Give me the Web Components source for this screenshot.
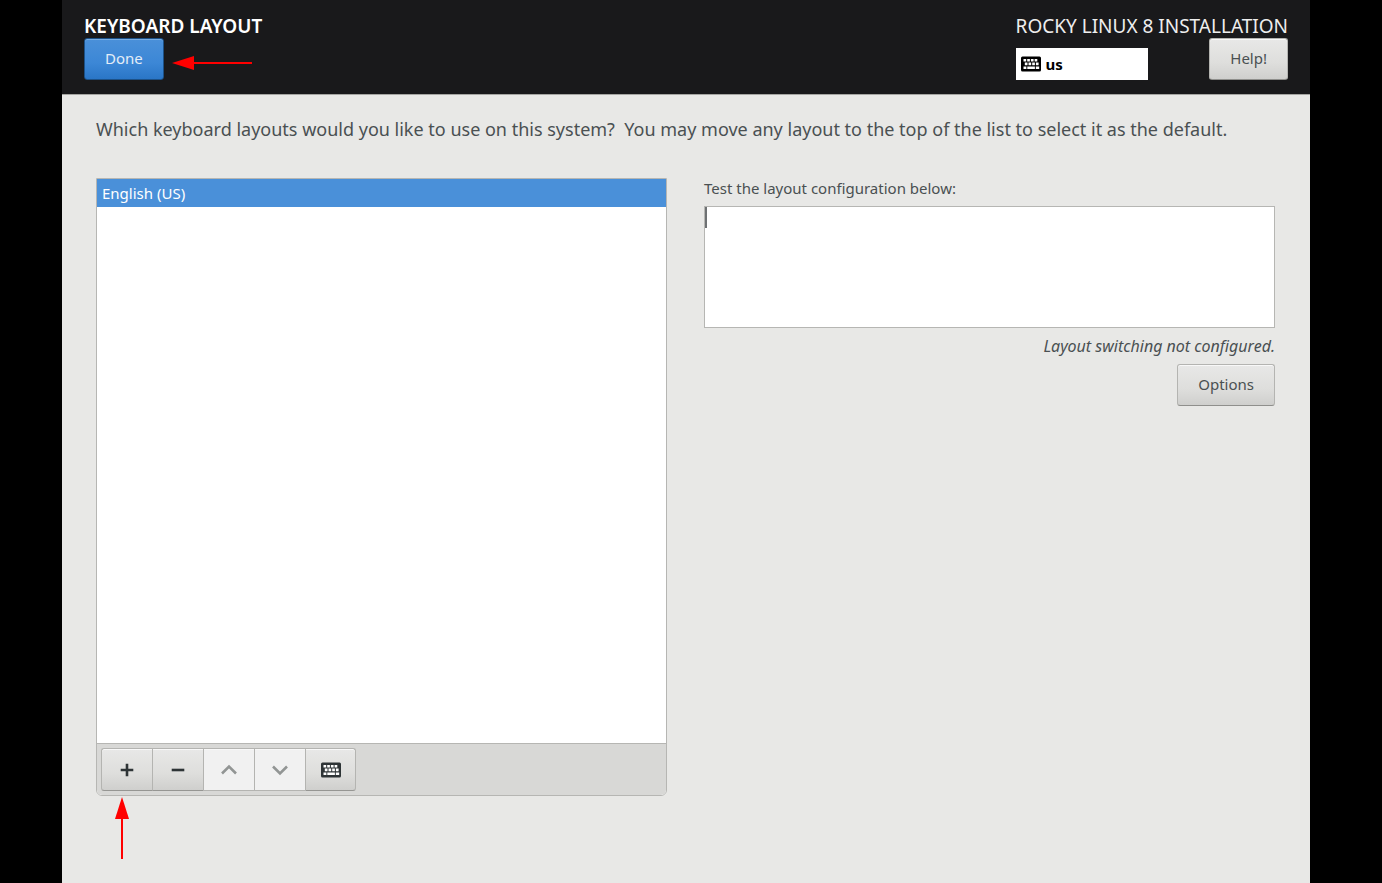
<!DOCTYPE html>
<html lang="en">
<head>
<meta charset="utf-8">
<meta name="viewport" content="width=device-width, initial-scale=1">
<title>Keyboard Layout</title>
<style>
    html { background: #000; }
    body { margin: 0; font: 15px/20px "Noto Sans", "Open Sans", sans-serif; color: #2e3436; }
</style>
</head>
<body>
<installer-page></installer-page>

<script>
// Icons are drawn on a 20x20 grid
const ICONS = {
    plus: '<path d="M8.700 3.700h2.600v5h5v2.600h-5v5H8.700v-5h-5V8.700h5z" fill="currentColor"/>',
    minus: '<path d="M3.700 8.700h12.600v2.600H3.700z" fill="currentColor"/>',
    up: '<path d="M3 13.500 10 6.500l7 7" fill="none" stroke="currentColor" stroke-width="2.600"/>',
    down: '<path d="M3 6.500 10 13.500 17 6.500" fill="none" stroke="currentColor" stroke-width="2.600"/>',
    keyboard: `<rect y="2.500" width="20" height="15" rx="1.500" fill="currentColor"/>
        <path d="M2.500 5h2.700v2.500H2.500zM6.200 5h2.700v2.500H6.200zM9.900 5h2.700v2.500H9.900zM13.600 5h2.700v2.500h-2.700zM3.800 8.600h2.700v2.600H3.800zM7.500 8.600h2.700v2.600H7.500zM11.200 8.600h2.700v2.600h-2.700zM14.900 8.600h2.700v2.600h-2.700zM2.500 12.400h2.900v2.500H2.500zM6.300 12.400h7.600v2.500H6.300zM14.800 12.400h3.400v2.500h-3.400z" fill="#fff"/>`
};

class UiIcon extends HTMLElement {
    constructor() {
        super();
        this.attachShadow({ mode: 'open' });
    }

    connectedCallback() {
        this.shadowRoot.innerHTML = `
            <style>
                :host { display: inline-flex; flex: none; }
                svg { display: block; width: 20px; height: 20px; }
            </style>
            <svg viewBox="0 0 20 20" aria-hidden="true">${ICONS[this.getAttribute('name')] || ''}</svg>
        `;
    }
}
customElements.define('ui-icon', UiIcon);

class UiButton extends HTMLElement {
    constructor() {
        super();
        this.attachShadow({ mode: 'open' });
        this.shadowRoot.innerHTML = `
            <style>
                :host { display: inline-flex; }
                button { box-sizing: border-box; height: 42px; padding: 0 20px 2px; border: 1px solid #b4b4b1; border-bottom-color: #8f8f8c; border-radius: 3px; font: inherit; color: #4a5052; background: linear-gradient(#e8e8e7, #dededc 60%, #cfcfcd); box-shadow: inset 0 1px #f8f8f8; cursor: pointer; }
                :host([primary]) button { color: #e4edf7; border-color: #1c5187; background: linear-gradient(#4a90d9, #3c87d6 60%, #2a76c6); box-shadow: inset 0 1px #79ade3; }
            </style>
            <button type="button"><slot></slot></button>
        `;
    }
}
customElements.define('ui-button', UiButton);

class PointerArrow extends HTMLElement {
    constructor() {
        super();
        this.attachShadow({ mode: 'open' });
    }

    connectedCallback() {
        const up = this.getAttribute('direction') === 'up';
        this.shadowRoot.innerHTML = `
            <style>:host, svg { display: block; flex: none; }</style>
            ${up
                ? '<svg width="14" height="62" viewBox="0 0 14 62" fill="red" aria-hidden="true"><path d="M7 0l7 22H0z"/><path d="M6 21h2v41H6z"/></svg>'
                : '<svg width="80" height="14" viewBox="0 0 80 14" fill="red" aria-hidden="true"><path d="M0 7L22 0v14z"/><path d="M21 6h59v2H21z"/></svg>'}
        `;
    }
}
customElements.define('pointer-arrow', PointerArrow);

class PageHeader extends HTMLElement {
    constructor() {
        super();
        this.attachShadow({ mode: 'open' });
        this.shadowRoot.innerHTML = `
            <style>
                :host { display: block; }
                header { display: flex; justify-content: space-between; padding: 14px 22px; background: #19191b; border-bottom: 1px solid #a5a5a2; color: #eee; }
                h1, p { margin: 0; font-size: 19px; line-height: 24px; white-space: nowrap; }
                h1 { font-weight: 600; color: #fff; }
                .row { display: flex; align-items: center; gap: 8px; }
                .row pointer-arrow { margin-top: 8px; }
                .end { justify-content: space-between; align-items: flex-end; }
                .indicator { box-sizing: border-box; display: flex; align-items: center; gap: 5px; width: 132px; height: 32px; padding: 0 5px 1px; border: 0; background: #fff; color: #000; font: inherit; font-weight: 700; cursor: pointer; }
            </style>
            <header>
                <div>
                    <h1>KEYBOARD LAYOUT</h1>
                    <div class="row">
                        <ui-button primary>Done</ui-button>
                        <pointer-arrow direction="left"></pointer-arrow>
                    </div>
                </div>
                <div>
                    <p>ROCKY LINUX 8 INSTALLATION</p>
                    <div class="row end">
                        <button class="indicator" type="button"><ui-icon name="keyboard"></ui-icon>us</button>
                        <ui-button>Help!</ui-button>
                    </div>
                </div>
            </header>
        `;
    }
}
customElements.define('page-header', PageHeader);

class LayoutList extends HTMLElement {
    constructor() {
        super();
        this.attachShadow({ mode: 'open' });
        this.shadowRoot.innerHTML = `
            <style>
                :host { display: flex; flex-direction: column; border: 1px solid #b6b6b3; border-radius: 0 0 6px 6px; background: #fff; overflow: hidden; }
                ul { flex: 1; margin: 0; padding: 0; list-style: none; }
                li { padding: 4px 5px; background: #4a90d9; color: #fff; }
                .toolbar { display: flex; padding: 4px; border-top: 1px solid #b6b6b3; background: #d8d8d6; }
                .toolbar button { display: flex; align-items: center; justify-content: center; box-sizing: border-box; width: 51px; height: 43px; padding: 0; border: 1px solid #b4b4b1; border-right-width: 0; border-bottom-color: #969693; color: #2e3436; background: linear-gradient(#e8e8e7, #dededc 60%, #cfcfcd); box-shadow: inset 0 1px #f8f8f8; cursor: pointer; }
                .toolbar button:first-child { border-radius: 3px 0 0 3px; }
                .toolbar button:last-child { border-right-width: 1px; border-radius: 0 3px 3px 0; }
                .toolbar button:disabled { color: #929594; background: #f1f1f1; border-bottom-color: #b4b4b1; cursor: default; }
            </style>
            <ul aria-label="Keyboard layouts"><li>English (US)</li></ul>
            <div class="toolbar">
                <button type="button" aria-label="Add layout"><ui-icon name="plus"></ui-icon></button>
                <button type="button" aria-label="Remove layout"><ui-icon name="minus"></ui-icon></button>
                <button type="button" aria-label="Move up" disabled><ui-icon name="up"></ui-icon></button>
                <button type="button" aria-label="Move down" disabled><ui-icon name="down"></ui-icon></button>
                <button type="button" aria-label="Preview layout"><ui-icon name="keyboard"></ui-icon></button>
            </div>
        `;
    }
}
customElements.define('layout-list', LayoutList);

class LayoutTest extends HTMLElement {
    constructor() {
        super();
        this.attachShadow({ mode: 'open' });
        this.shadowRoot.innerHTML = `
            <style>
                :host { display: flex; flex-direction: column; align-items: flex-end; }
                label { align-self: stretch; margin-bottom: 8px; color: #4a5052; }
                .field { position: relative; align-self: stretch; }
                textarea { display: block; box-sizing: border-box; width: 100%; height: 122px; padding: 1px 2px; border: 1px solid #b6b6b3; outline: 0; resize: none; font: inherit; color: inherit; background: #fff; caret-color: transparent; }
                /* steady caret on top of the empty field */
                .caret { position: absolute; top: 1px; left: 1px; width: 2px; height: 21px; background: #6e7173; }
                p { margin: 8px 0; font-size: 16px; font-style: italic; color: #4a5052; }
            </style>
            <label for="test">Test the layout configuration below:</label>
            <div class="field">
                <textarea id="test"></textarea>
                <span class="caret"></span>
            </div>
            <p>Layout switching not configured.</p>
            <ui-button>Options</ui-button>
        `;
    }
}
customElements.define('layout-test', LayoutTest);

class InstallerPage extends HTMLElement {
    constructor() {
        super();
        this.attachShadow({ mode: 'open' });
        this.shadowRoot.innerHTML = `
            <style>
                :host { display: flex; flex-direction: column; box-sizing: border-box; min-height: 100vh; padding: 0 72px 0 62px; }
                main { flex: 1; display: flex; flex-direction: column; padding: 21px 35px 24px 34px; background: #e8e8e6; }
                .intro { margin: 0 0 36px; font-size: 18px; line-height: 26px; color: #4a5052; white-space: pre-wrap; }
                .columns { flex: 1; display: grid; grid-template-columns: 1fr 1fr; gap: 37px; }
                pointer-arrow { margin: 1px 0 0 19px; }
            </style>
            <page-header></page-header>
            <main>
                <p class="intro">Which keyboard layouts would you like to use on this system?  You may move any layout to the top of the list to select it as the default.</p>
                <div class="columns">
                    <layout-list></layout-list>
                    <layout-test></layout-test>
                </div>
                <pointer-arrow direction="up"></pointer-arrow>
            </main>
        `;
    }
}
customElements.define('installer-page', InstallerPage);
</script>
</body>
</html>
